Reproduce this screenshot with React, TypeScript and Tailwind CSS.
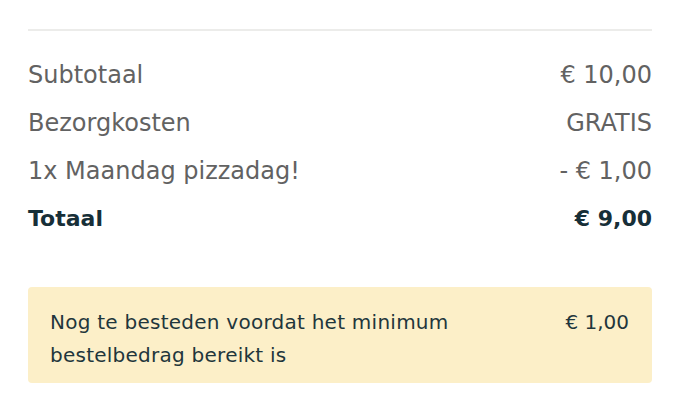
import React from "react";

const rows = [
  { label: "Subtotaal", value: "€ 10,00" },
  { label: "Bezorgkosten", value: "GRATIS" },
  { label: "1x Maandag pizzadag!", value: "- € 1,00" },
];

export default function App() {
  return (
    <div
      className="w-[680px] h-[420px] bg-white px-[28px] pt-[29px]"
      style={{ fontFamily: '"DejaVu Sans", sans-serif' }}
    >
      <div className="h-[2px] bg-[#ececea]" />
      <div className="mt-[20px]">
        {rows.map((r) => (
          <div
            key={r.label}
            className="flex justify-between h-[48px] leading-[48px] text-[24px] text-[#626262]"
          >
            <span>{r.label}</span>
            <span>{r.value}</span>
          </div>
        ))}
        <div className="flex justify-between h-[48px] leading-[48px] text-[22px] font-bold text-[#172f38]">
          <span>Totaal</span>
          <span>€ 9,00</span>
        </div>
      </div>
      <div className="mt-[44px] h-[96px] rounded-[4px] bg-[#fcefc8] pl-[22px] pr-[23px] pt-[19px] flex justify-between text-[20px] leading-[33px] tracking-[0.25px] text-[#1f363c]">
        <span className="w-[450px]">
          Nog te besteden voordat het minimum bestelbedrag bereikt is
        </span>
        <span className="tracking-normal">€ 1,00</span>
      </div>
    </div>
  );
}
